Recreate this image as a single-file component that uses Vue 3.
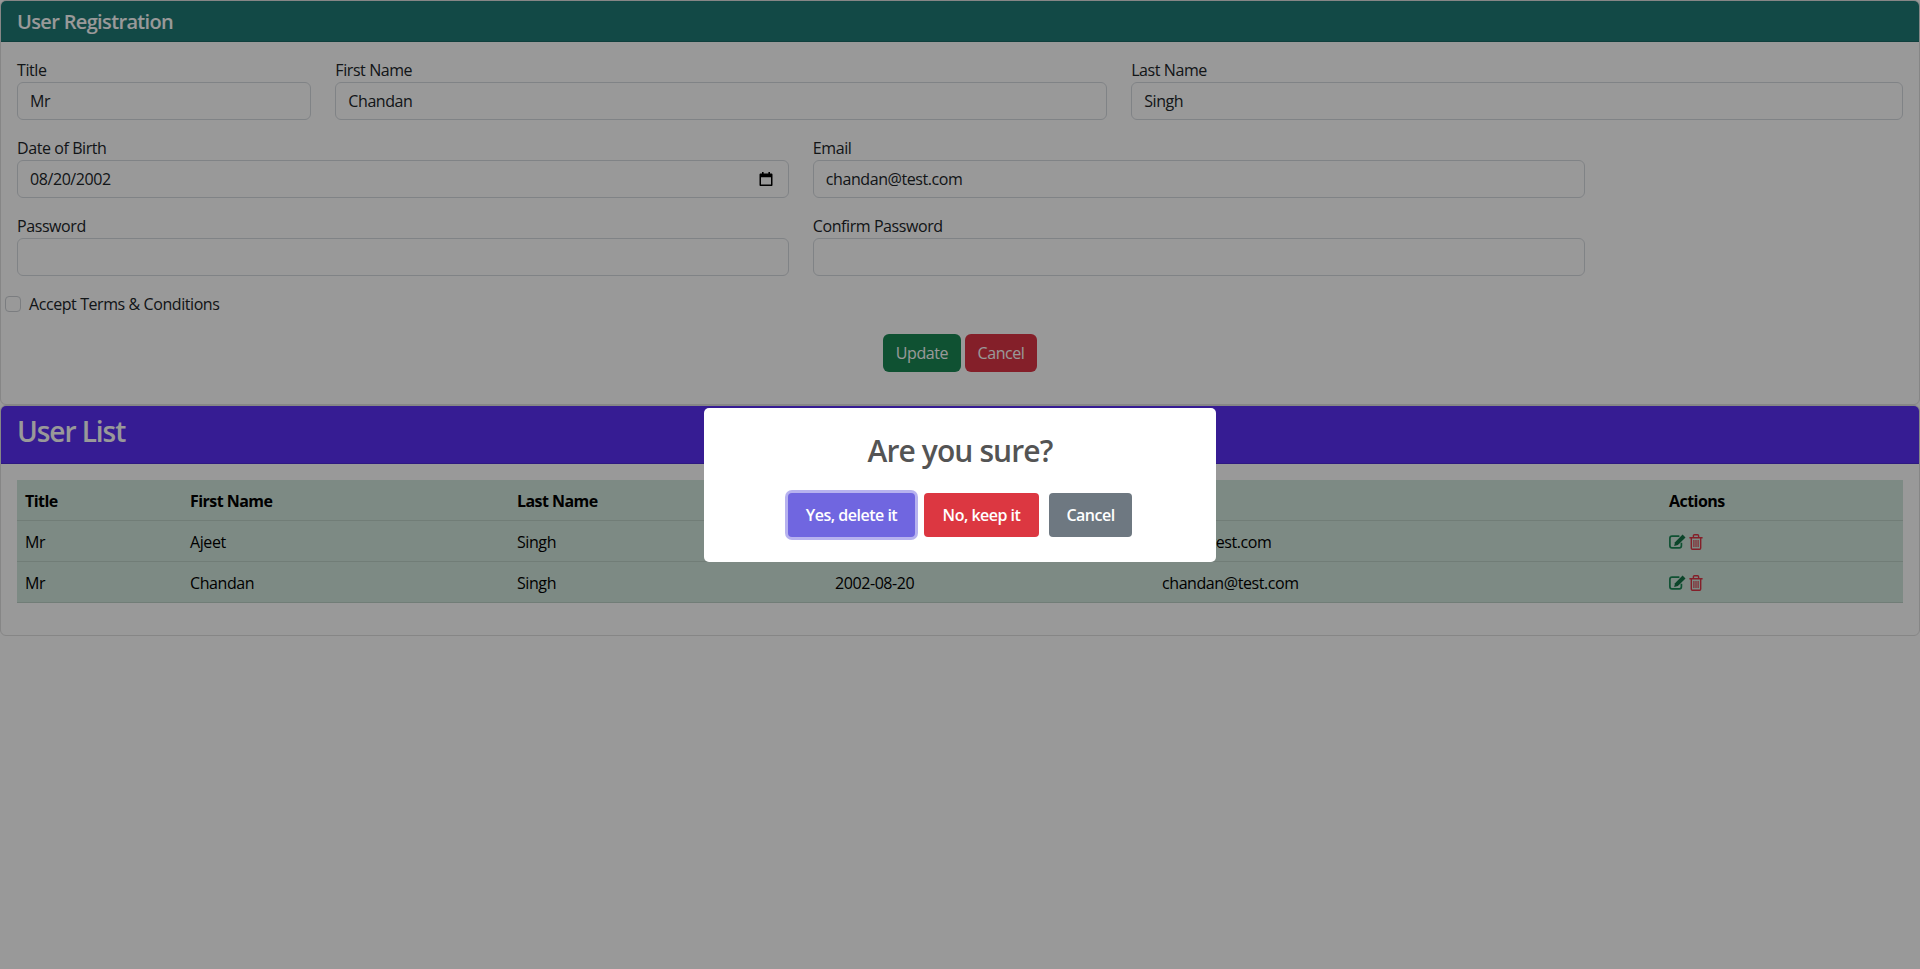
<script setup>
const rows = [
  { title: 'Mr', first: 'Ajeet', last: 'Singh', dob: '2000-01-15', email: 'ajeet@test.com' },
  { title: 'Mr', first: 'Chandan', last: 'Singh', dob: '2002-08-20', email: 'chandan@test.com' },
]
</script>

<template>
  <div class="page">
    <section class="card first">
      <h5 class="head teal">User Registration</h5>
      <form class="body" @submit.prevent>
        <div class="grid">
          <label class="field s2"><span>Title</span><input class="ctl" value="Mr" /></label>
          <label class="field s5"><span>First Name</span><input class="ctl" value="Chandan" /></label>
          <label class="field s5"><span>Last Name</span><input class="ctl" value="Singh" /></label>
          <label class="field s5">
            <span>Date of Birth</span>
            <span class="ctl date">
              <span>08/20/2002</span>
              <svg width="16" height="16" viewBox="0 0 16 16"><path fill="#000" d="M4 1h1.6v1.4h4.8V1H12v1.4h1.4c.6 0 1.100.5 1.100 1.100v10.400c0 .6-.5 1.100-1.100 1.100H2.600c-.6 0-1.100-.5-1.100-1.100V3.500c0-.6.5-1.100 1.100-1.100H4zM3 6.300v7.200h10V6.300z"/></svg>
            </span>
          </label>
          <label class="field s5"><span>Email</span><input class="ctl" value="chandan@test.com" /></label>
          <label class="field s5 restart"><span>Password</span><input class="ctl" type="password" /></label>
          <label class="field s5"><span>Confirm Password</span><input class="ctl" type="password" /></label>
        </div>
        <label class="check"><span class="box"></span>Accept Terms &amp; Conditions</label>
        <div class="actions">
          <button class="btn green">Update</button>
          <button class="btn red">Cancel</button>
        </div>
      </form>
    </section>

    <section class="card">
      <h3 class="head violet">User List</h3>
      <div class="body">
        <table>
          <colgroup>
            <col class="c1" /><col class="c2" /><col class="c3" /><col class="c4" /><col class="c5" /><col />
          </colgroup>
          <thead>
            <tr><th>Title</th><th>First Name</th><th>Last Name</th><th>Date of Birth</th><th>Email</th><th>Actions</th></tr>
          </thead>
          <tbody>
            <tr v-for="r in rows" :key="r.email">
              <td>{{ r.title }}</td><td>{{ r.first }}</td><td>{{ r.last }}</td><td>{{ r.dob }}</td><td>{{ r.email }}</td>
              <td class="icons">
                <svg class="edit" width="17" height="15" viewBox="0 0 17 15" fill="none">
                  <path stroke="#198754" stroke-width="1.700" d="M12.400 8.800v3c0 1.200-.9 2.100-2.100 2.100H3c-1.200 0-2.100-.9-2.100-2.100V4.300c0-1.200.9-2.100 2.100-2.100h7.400"/>
                  <path fill="#157347" d="M13.600.6l2.900 2.900-7.600 7.600-3.700.8.800-3.700z"/>
                </svg>
                <svg class="trash" width="14" height="16" viewBox="0 0 14 16" fill="none" stroke="#dc3545">
                  <path stroke-width="1.400" d="M2.300 4v10c0 .8.500 1.300 1.100 1.300h7.200c.6 0 1.100-.5 1.100-1.300V4M.4 3.700h13.200M4.400 3.500V1.800c0-.6.400-1 1-1h3.200c.6 0 1 .4 1 1v1.700"/>
                  <path stroke-width="1.100" d="M4.900 6v7M7 6v7M9.100 6v7"/>
                </svg>
              </td>
            </tr>
          </tbody>
        </table>
      </div>
    </section>

    <div class="backdrop">
      <div class="dialog">
        <h2>Are you sure?</h2>
        <div class="choices">
          <button class="sw yes">Yes, delete it</button>
          <button class="sw no">No, keep it</button>
          <button class="sw skip">Cancel</button>
        </div>
      </div>
    </div>
  </div>
</template>

<style>
html, body { margin: 0; background: #fff; }
</style>

<style scoped>
.page {
  font: 400 16px/24px "Open Sans", "Noto Sans", sans-serif;
  letter-spacing: -0.42px;
  color: #212529;
}
.card { border: 1px solid rgba(0,0,0,.125); border-radius: 6px; overflow: hidden; }
.first { height: 405px; box-sizing: border-box; }
.head { margin: 0; color: #fff; border-bottom: 1px solid rgba(0,0,0,.125); }
.teal { background: #1f7a76; font-size: 20px; font-weight: 600; line-height: 24px; padding: 9px 16px 7px; letter-spacing: -0.65px; }
.violet { background: #5a30f5; font-size: 28px; font-weight: 600; line-height: 33.600px; padding: 9px 16px 14.400px; letter-spacing: -1.050px; }
.body { padding: 16px; display: block; }
.grid { display: grid; grid-template-columns: repeat(12, 1fr); column-gap: 24px; row-gap: 16px; }
.field { display: flex; flex-direction: column; }
.s2 { grid-column: span 2; }
.s5 { grid-column: span 5; }
.restart { grid-column: 1 / span 5; }
.ctl {
  box-sizing: border-box;
  height: 38px;
  width: 100%;
  padding: 6px 12px;
  border: 1px solid #d6dadf;
  border-radius: 6px;
  background: #fff;
  font: inherit;
  letter-spacing: inherit;
  color: #212529;
  outline: none;
}
.date { display: flex; align-items: center; justify-content: space-between; padding-right: 14px; }
.check { display: flex; align-items: center; height: 24px; margin: 16px 0 0 -12px; }
.box { box-sizing: border-box; width: 16px; height: 16px; border: 1px solid #cdd1d5; border-radius: 4px; background: #fff; margin-right: 8px; }
.actions { display: flex; justify-content: center; gap: 4px; margin-top: 18px; }
.btn { height: 38px; padding: 0; border: 0; border-radius: 6px; color: #fff; font: inherit; letter-spacing: inherit; }
.green { width: 78px; background: #198754; }
.red { width: 72px; background: #dc3545; }

table { width: 100%; border-collapse: collapse; table-layout: fixed; background: #d1e7dd; color: #000; margin-bottom: 16px; }
.c1 { width: 165px; } .c2 { width: 327px; } .c3 { width: 318px; } .c4 { width: 327px; } .c5 { width: 507px; }
th, td { padding: 9px 8px 7px; height: 41px; box-sizing: border-box; text-align: left; border-bottom: 1px solid #bcd0c7; font-weight: 400; }
th { font-weight: 700; letter-spacing: -0.55px; }
td.icons { white-space: nowrap; line-height: 0; padding: 8px; }
.icons svg { vertical-align: middle; }
.edit { margin-right: 3px; }
.trash { margin-top: 2px; }

.backdrop { position: fixed; inset: 0; background: rgba(0,0,0,.4); display: flex; justify-content: center; align-items: flex-start; }
.dialog { box-sizing: border-box; width: 512px; height: 154px; margin-top: 408px; background: #fff; border-radius: 5px; display: flex; flex-direction: column; align-items: center; }
h2 { margin: 25px 0 0; font-size: 30px; line-height: 36px; font-weight: 600; color: #545454; letter-spacing: -0.9px; }
.choices { display: flex; gap: 9px; margin-top: 24px; }
.sw { height: 44px; padding: 0; border: 0; border-radius: 4px; color: #fff; font: 600 16px/24px "Open Sans", "Noto Sans", sans-serif; letter-spacing: -0.5px; }
.yes { width: 127px; background: #7066e0; box-shadow: 0 0 0 3px rgba(112,102,224,.5); }
.no { width: 115px; margin-right: 1px; background: #dc3741; }
.skip { width: 83px; background: #6e7881; }
</style>
